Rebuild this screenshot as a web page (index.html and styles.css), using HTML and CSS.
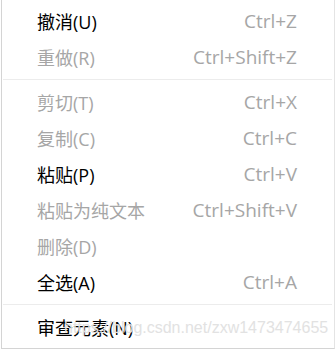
FILE: index.html
```html
<!DOCTYPE html>
<html lang="zh-CN">
<head>
    <meta charset="UTF-8">
    <title>右键菜单</title>
    <link rel="stylesheet" href="styles.css">
</head>
<body>
    <div class="menu">
        <div class="item"><span class="label">撤消(U)</span><span class="key">Ctrl+Z</span></div>
        <div class="item off"><span class="label">重做(R)</span><span class="key">Ctrl+Shift+Z</span></div>
        <div class="sep"></div>
        <div class="item off"><span class="label">剪切(T)</span><span class="key">Ctrl+X</span></div>
        <div class="item off"><span class="label">复制(C)</span><span class="key">Ctrl+C</span></div>
        <div class="item"><span class="label">粘贴(P)</span><span class="key">Ctrl+V</span></div>
        <div class="item off"><span class="label">粘贴为纯文本</span><span class="key">Ctrl+Shift+V</span></div>
        <div class="item off"><span class="label">删除(D)</span></div>
        <div class="item"><span class="label">全选(A)</span><span class="key">Ctrl+A</span></div>
        <div class="sep"></div>
        <div class="item"><span class="label">审查元素(N)</span></div>
        <!-- 图片水印 -->
        <div class="watermark">https://blog.csdn.net/zxw1473474655</div>
    </div>
</body>
</html>
```

FILE: styles.css
```css
* {
    margin: 0;
    padding: 0;
    box-sizing: border-box;
}

body {
    background-color: #fff;
    font-family: 'Open Sans', 'Noto Sans CJK SC', sans-serif;
    font-size: 18px;
}

.menu {
    position: relative;
    width: 334px;
    height: 349px;
    padding-top: 3px;
    margin-left: 1px;
    background: white;
    border-left: 1px solid #d4d4d4;
    border-right: 1px solid #e4e4e4;
    border-bottom: 1px solid #d4d4d4;
}

.item {
    display: flex;
    align-items: center;
    justify-content: space-between;
    height: 36px;
    padding: 0 37px 0 35px;
    color: #000;
}

.item.off .label {
    color: #a6a6a6;
}

.key {
    color: #a6a6a6;
    font-size: 19px;
}

.sep {
    height: 9px;
    margin: 0 2px 0 1px;
    border-bottom: 1px solid #ececec;
    transform: translateY(-4px);
}

.watermark {
    position: absolute;
    left: 62px;
    top: 319px;
    font-family: 'Liberation Sans', Arial, sans-serif;
    font-size: 16px;
    color: #e2e2e2;
}
```
